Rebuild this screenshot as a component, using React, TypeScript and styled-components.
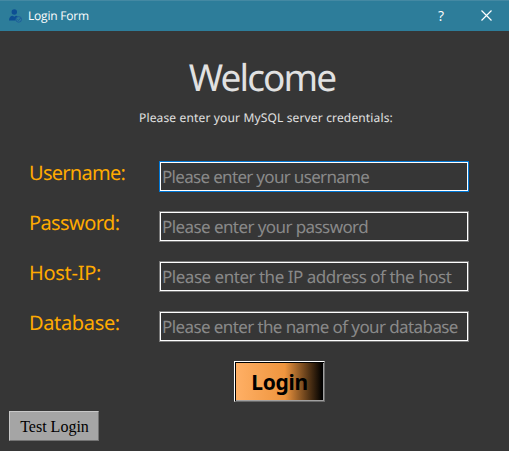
import React from 'react';
import styled, { createGlobalStyle } from 'styled-components';

const GlobalStyle = createGlobalStyle`
  * { box-sizing: border-box; }
  body { margin: 0; background: #363636; overflow: hidden; text-rendering: geometricPrecision; }
`;

const uiFont = '"Noto Sans", "Open Sans", sans-serif';

const Dialog = styled.main`
  width: 509px;
  height: 451px;
  display: flex;
  flex-direction: column;
  background: #363636;
  font-family: ${uiFont};
`;

const TitleBar = styled.header`
  height: 31px;
  flex: none;
  display: flex;
  align-items: center;
  padding-left: 8px;
  background: #2d7d9a;
  border-top: 1px solid #4489a3;
  color: #fff;
`;

const Caption = styled.span`
  flex: 1;
  margin-left: 5px;
  font-family: "Open Sans", sans-serif;
  font-size: 12px;
  line-height: 16px;
  letter-spacing: -0.2px;
  white-space: nowrap;
`;

const TitleButton = styled.button`
  width: 45px;
  height: 30px;
  padding: 0 1px 1px 0;
  display: flex;
  align-items: center;
  justify-content: center;
  border: 0;
  background: transparent;
  color: #fff;
  font: 14px/16px "Open Sans", sans-serif;
`;

const Heading = styled.h1`
  margin: 21px 0 0 15px;
  height: 50px;
  text-align: center;
  font-size: 37px;
  line-height: 50px;
  font-weight: 400;
  letter-spacing: -1.9px;
  color: #e1e1e1;
`;

const Subtitle = styled.p`
  margin: 7px 0 0 23px;
  height: 18px;
  text-align: center;
  font-size: 12px;
  line-height: 18px;
  letter-spacing: 0.15px;
  color: #e1e1e1;
`;

const Form = styled.form`
  display: flex;
  flex-direction: column;
  margin-top: 34px;
  padding-left: 29px;
`;

const Row = styled.div`
  display: flex;
  height: 50px;
`;

const Label = styled.label<{ $tracking: number }>`
  width: 130px;
  height: 24px;
  font-size: 20px;
  line-height: 24px;
  letter-spacing: ${p => p.$tracking}px;
  color: #ffaa00;
`;

const Field = styled.input<{ $active?: boolean; $tracking: number }>`
  width: 310px;
  height: 31px;
  padding: 0 1px 0 2px;
  border: 1px solid ${p => (p.$active ? '#0078d7' : '#7a7a7a')};
  border-radius: 0;
  outline: none;
  box-shadow: inset 0 0 0 1px #fff;
  background: transparent;
  color: #e1e1e1;
  font-family: ${uiFont};
  font-size: 17px;
  letter-spacing: ${p => p.$tracking}px;
  text-rendering: geometricPrecision;
  &::placeholder { color: #898989; opacity: 1; }
`;

const LoginButton = styled.button`
  width: 91px;
  height: 41px;
  margin-left: 205px;
  padding: 0;
  border: 1px solid;
  border-color: #fff #696969 #696969 #fff;
  box-shadow: inset 1px 1px 0 #000, inset -1px -1px 0 #a0a0a0;
  background: linear-gradient(90deg, #ffb066 0%, #ef953e 56%, #000 98%);
  color: #000;
  font: 700 21px/26px ${uiFont};
  letter-spacing: -0.3px;
`;

const TestButton = styled.button`
  width: 90px;
  height: 30px;
  margin: 9px 0 0 9px;
  padding: 2px 0 0 1px;
  border: 1px solid;
  border-color: #c8c8c8 #737373 #737373 #c8c8c8;
  background: #a5a5a5;
  color: #000;
  font: 16px/18px "Liberation Serif", "Times New Roman", serif;
`;

const fields = [
  { id: 'username', label: 'Username:', labelTracking: -0.72, hint: 'Please enter your username', hintTracking: -0.68, active: true },
  { id: 'password', label: 'Password:', labelTracking: -0.6, hint: 'Please enter your password', hintTracking: -0.58 },
  { id: 'host', label: 'Host-IP:', labelTracking: -0.3, hint: 'Please enter the IP address of the host', hintTracking: -0.48 },
  { id: 'database', label: 'Database:', labelTracking: -0.35, hint: 'Please enter the name of your database', hintTracking: -0.6 },
];

const UserIcon = () => (
  <svg width="15" height="15" viewBox="0 0 15 15">
    <g fill="#0d4f94">
      <circle cx="6.3" cy="3" r="2.7" />
      <path d="M1 11.6c0-3 1.6-4.8 3.7-4.8l1.6 1 1.6-1c.9 0 1.6.3 2.1.7-1.6.6-2.6 2.1-2.3 4.100z" />
    </g>
    <circle cx="10.7" cy="10.4" r="2.8" fill="none" stroke="#1c5a9a" strokeWidth=".9" />
    <path d="M9.3 10.4l1.1 1.1 2.2-2.4" fill="none" stroke="#1c5a9a" strokeWidth="1" />
  </svg>
);

export default function App() {
  return (
    <>
      <GlobalStyle />
      <Dialog>
        <TitleBar>
          <UserIcon />
          <Caption>Login Form</Caption>
          <TitleButton aria-label="Help">?</TitleButton>
          <TitleButton aria-label="Close">
            <svg width="11" height="11" viewBox="0 0 11 11">
              <path d="M.5.5l10 10M10.5.5l-10 10" stroke="#fff" strokeWidth="1.2" />
            </svg>
          </TitleButton>
        </TitleBar>
        <Heading>Welcome</Heading>
        <Subtitle>Please enter your MySQL server credentials:</Subtitle>
        <Form>
          {fields.map(f => (
            <Row key={f.id}>
              <Label htmlFor={f.id} $tracking={f.labelTracking}>{f.label}</Label>
              <Field id={f.id} placeholder={f.hint} $active={f.active} $tracking={f.hintTracking} />
            </Row>
          ))}
          <LoginButton type="button">Login</LoginButton>
        </Form>
        <TestButton type="button">Test Login</TestButton>
      </Dialog>
    </>
  );
}
